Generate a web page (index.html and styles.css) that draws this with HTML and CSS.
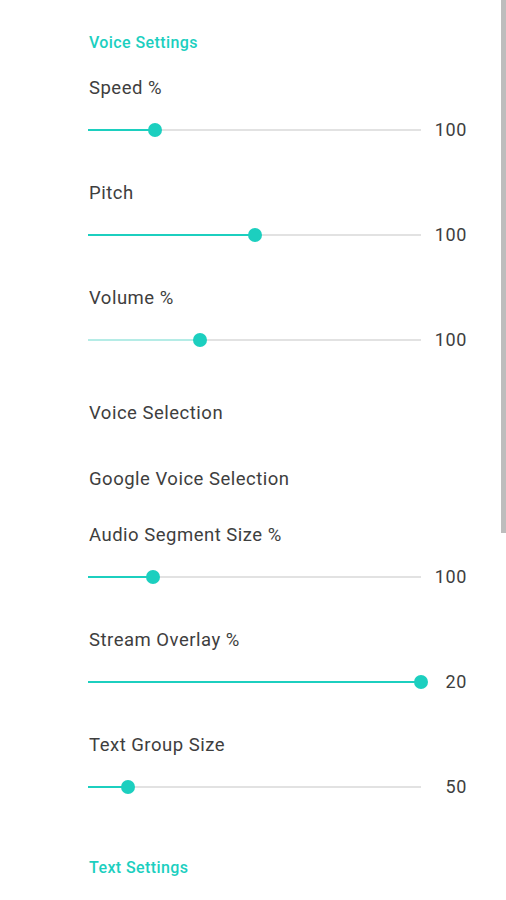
FILE: index.html
```html
<!DOCTYPE html>
<html>
<head>
<meta charset="utf-8">
<link rel="stylesheet" href="styles.css">
</head>
<body>
<div class="screen">
  <div class="category first">Voice Settings</div>

  <div class="pref">
    <div class="label">Speed %</div>
    <div class="slider-row">
      <div class="track"><div class="fill" style="width:20%"></div><div class="thumb" style="left:20%"></div></div>
      <div class="value">100</div>
    </div>
  </div>

  <div class="pref">
    <div class="label">Pitch</div>
    <div class="slider-row">
      <div class="track"><div class="fill" style="width:50.3%"></div><div class="thumb" style="left:50.3%"></div></div>
      <div class="value">100</div>
    </div>
  </div>

  <div class="pref">
    <div class="label">Volume %</div>
    <div class="slider-row">
      <div class="track"><div class="fill light" style="width:33.5%"></div><div class="thumb" style="left:33.5%"></div></div>
      <div class="value">100</div>
    </div>
  </div>

  <div class="pref simple">
    <div class="label">Voice Selection</div>
  </div>

  <div class="pref simple">
    <div class="label">Google Voice Selection</div>
  </div>

  <div class="pref">
    <div class="label">Audio Segment Size %</div>
    <div class="slider-row">
      <div class="track"><div class="fill" style="width:19.5%"></div><div class="thumb" style="left:19.5%"></div></div>
      <div class="value">100</div>
    </div>
  </div>

  <div class="pref">
    <div class="label">Stream Overlay %</div>
    <div class="slider-row">
      <div class="track"><div class="fill" style="width:100%"></div><div class="thumb" style="left:100%"></div></div>
      <div class="value">20</div>
    </div>
  </div>

  <div class="pref">
    <div class="label">Text Group Size</div>
    <div class="slider-row">
      <div class="track"><div class="fill" style="width:12%"></div><div class="thumb" style="left:12%"></div></div>
      <div class="value">50</div>
    </div>
  </div>

  <div class="category second">Text Settings</div>
</div>
<div class="scrollbar"></div>
</body>
</html>
```
FILE: styles.css
```css
html, body {
  margin: 0;
  padding: 0;
  background: #ffffff;
}
body {
  font-family: Roboto, "Liberation Sans", sans-serif;
  color: #3e3e3e;
  width: 506px;
  height: 900px;
  overflow: hidden;
  position: relative;
}
.screen {
  padding: 33px 40px 0 88px;
  display: flex;
  flex-direction: column;
}
.category {
  color: #1ccfbf;
  font-size: 16px;
  line-height: 20px;
  height: 20px;
  padding-left: 1px;
  font-weight: 500;
  letter-spacing: 0.4px;
}
.category.first {
  margin-bottom: 3px;
}
.category.second {
  margin-top: 40px;
}
.pref {
  display: flex;
  flex-direction: column;
  gap: 18px;
  padding: 20px 0 19px 0;
}
.pref.simple {
  padding: 30px 0 12px 0;
}
.label {
  font-size: 18.5px;
  line-height: 24px;
  height: 24px;
  padding-left: 1px;
  letter-spacing: 0.5px;
}
.slider-row {
  display: flex;
  align-items: center;
  height: 24px;
}
.track {
  flex: 1;
  height: 2px;
  background: #e2e2e2;
  position: relative;
}
.fill {
  height: 2px;
  background: #1ccfbf;
}
.fill.light {
  background: #b5ece6;
}
.thumb {
  position: absolute;
  top: -6px;
  width: 14px;
  height: 14px;
  margin-left: -7px;
  border-radius: 50%;
  background: #1ccfbf;
}
.value {
  width: 46px;
  margin-right: -1px;
  text-align: right;
  font-size: 18px;
  line-height: 24px;
  letter-spacing: 0.6px;
}
.scrollbar {
  position: absolute;
  top: 0;
  right: 0;
  width: 5px;
  height: 533px;
  background: #bdbdbd;
}
```
